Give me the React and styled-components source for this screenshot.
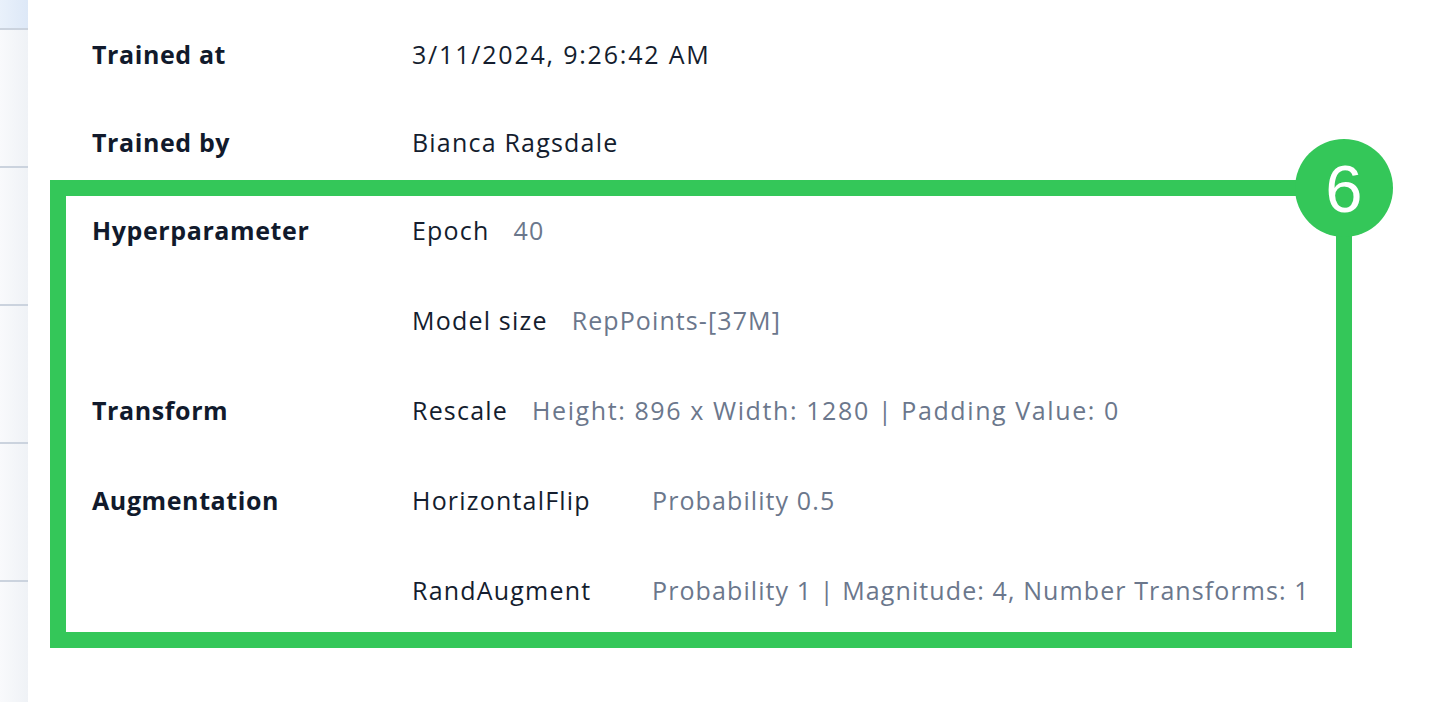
import React from 'react';
import styled, { createGlobalStyle } from 'styled-components';

const GlobalStyle = createGlobalStyle`
  html, body {
    margin: 0;
    padding: 0;
    background: #ffffff;
  }
  body {
    font-family: "Open Sans", Lato, sans-serif;
    -webkit-font-smoothing: antialiased;
  }
`;

const Page = styled.div`
  display: flex;
  width: 1432px;
  height: 702px;
  overflow: hidden;
  background: #fff;
`;

const Sidebar = styled.aside`
  flex: 0 0 28px;
  display: flex;
  flex-direction: column;
  background: linear-gradient(to right, #f9fafc, #eff2f6);
`;

const SideItem = styled.div`
  flex: 0 0 ${p => p.h}px;
  border-bottom: 2px solid #cbd3de;
  background: ${p => (p.active ? 'linear-gradient(to right, #e9f1fb, #dde8f7)' : 'transparent')};
`;

const Main = styled.main`
  flex: 1;
  padding: 38px 80px 0 0;
  display: flex;
  flex-direction: column;
`;

const Plain = styled.div`
  display: flex;
  flex-direction: column;
  gap: 56px;
  padding-left: 64px;
`;

const Highlight = styled.section`
  position: relative;
  margin: 22px 0 0 22px;
  border: 16px solid #34c759;
  padding: 18px 0 26px 26px;
  display: flex;
  flex-direction: column;
  gap: 58px;
`;

/* sits on the top-right corner of the border */
const Badge = styled.div`
  position: absolute;
  top: -57px;
  right: -57px;
  width: 98px;
  height: 98px;
  border-radius: 50%;
  background: #34c759;
  color: #fff;
  display: flex;
  align-items: center;
  justify-content: center;
  font-family: "Liberation Sans", Arial, sans-serif;
  font-size: 67px;
  line-height: 1;
`;

const Row = styled.div`
  display: grid;
  grid-template-columns: 320px 1fr;
  line-height: 32px;
  font-size: 25px;
  letter-spacing: 1px;
`;

const Label = styled.div`
  font-weight: 700;
  color: #111a2c;
  letter-spacing: 0.6px;
`;

const Values = styled.div`
  display: flex;
  flex-direction: column;
  gap: 58px;
`;

const Pair = styled.div`
  display: ${p => (p.grid ? 'grid' : 'flex')};
  grid-template-columns: 240px 1fr;
  gap: ${p => (p.grid ? 0 : 24)}px;
  white-space: nowrap;
`;

const Name = styled.span`
  color: #141d2e;
  letter-spacing: ${p => (p.digits ? 1.8 : 1.2)}px;
`;

const Detail = styled.span`
  color: #6b778c;
  letter-spacing: ${p => (p.digits ? 1.6 : 1.1)}px;
`;

const sideItems = [28, 136, 136, 136, 136, 200];

const App = () => (
  <>
    <GlobalStyle />
    <Page>
      <Sidebar>
        {sideItems.map((h, i) => (
          <SideItem key={i} h={h} active={i === 0} />
        ))}
      </Sidebar>
      <Main>
        <Plain>
          <Row>
            <Label>Trained at</Label>
            <Name digits>3/11/2024, 9:26:42 AM</Name>
          </Row>
          <Row>
            <Label>Trained by</Label>
            <Name>Bianca Ragsdale</Name>
          </Row>
        </Plain>
        <Highlight>
          <Badge>6</Badge>
          <Row>
            <Label>Hyperparameter</Label>
            <Values>
              <Pair>
                <Name>Epoch</Name>
                <Detail>40</Detail>
              </Pair>
              <Pair>
                <Name>Model size</Name>
                <Detail>RepPoints-[37M]</Detail>
              </Pair>
            </Values>
          </Row>
          <Row>
            <Label>Transform</Label>
            <Pair>
              <Name>Rescale</Name>
              <Detail digits>Height: 896 x Width: 1280 | Padding Value: 0</Detail>
            </Pair>
          </Row>
          <Row>
            <Label>Augmentation</Label>
            <Values>
              <Pair grid>
                <Name>HorizontalFlip</Name>
                <Detail>Probability 0.5</Detail>
              </Pair>
              <Pair grid>
                <Name>RandAugment</Name>
                <Detail>Probability 1 | Magnitude: 4, Number Transforms: 1</Detail>
              </Pair>
            </Values>
          </Row>
        </Highlight>
      </Main>
    </Page>
  </>
);

export default App;
